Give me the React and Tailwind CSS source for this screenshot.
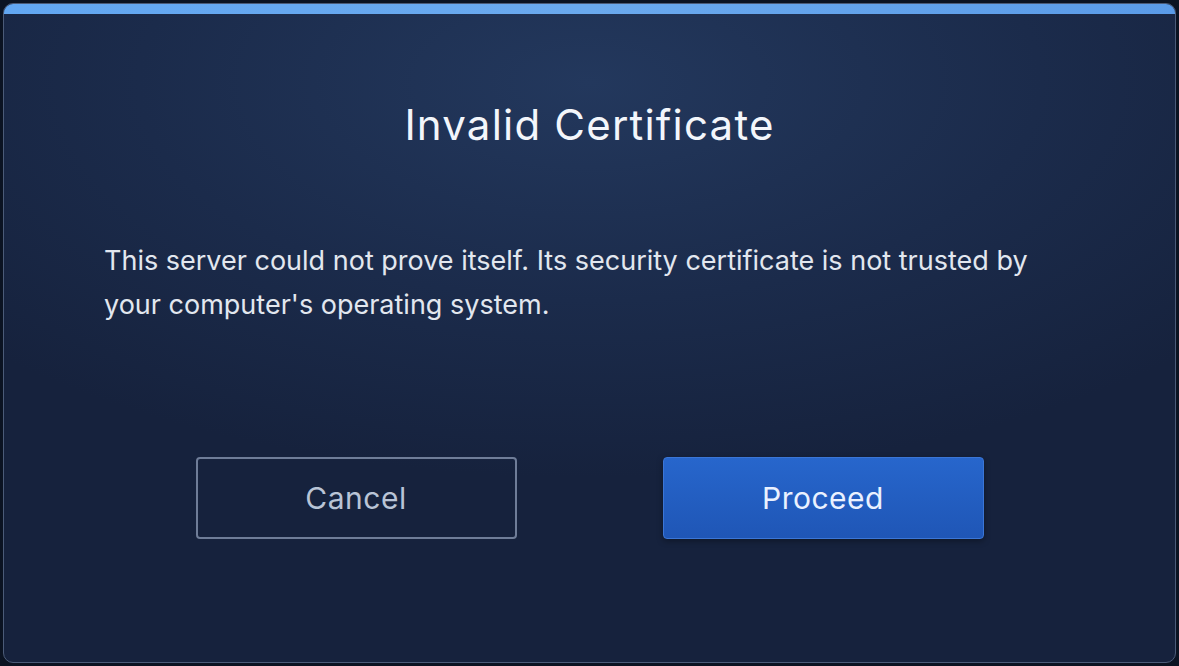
import React from "react";

const App = () => {
  return (
    <div
      className="w-full h-[666px] bg-[#0b1322] p-[3px]"
      style={{ fontFamily: "Inter, 'Noto Sans', sans-serif" }}
    >
      <div className="h-full flex flex-col rounded-[10px] overflow-hidden border border-[#4b5b78] bg-[radial-gradient(ellipse_70%_60%_at_50%_12%,#23385d_0%,#1b2b4b_55%,#16223d_100%)]">
        {/* top accent */}
        <div className="h-[10px] shrink-0 bg-gradient-to-r from-[#62a7f2] via-[#6aa9ee] to-[#5a9be8]"></div>

        <div className="flex-1 flex flex-col px-[100px]">
          <h1 className="mt-[85px] text-center text-[42px] leading-[52px] text-[#f3f6fb] font-normal tracking-[1.2px]">
            Invalid Certificate
          </h1>

          <p className="mt-[88px] text-[27px] leading-[44px] text-[#e2e7ef]">
            This server could not prove itself. Its security certificate is not trusted by
            <br />
            your computer's operating system.
          </p>

          <div className="mt-[130px] flex justify-center gap-[146px]">
            <button className="w-[321px] h-[82px] rounded-[4px] border-2 border-[#6f7d98] text-[30px] tracking-[0.5px] text-[#b9c4d6]">
              Cancel
            </button>
            <button className="w-[321px] h-[82px] rounded-[4px] border border-[#3b76d6] bg-gradient-to-b from-[#2766cc] to-[#1f56b6] text-[30px] tracking-[0.5px] text-[#eaf1ff] shadow-[0_2px_6px_rgba(0,0,0,0.35)]">
              Proceed
            </button>
          </div>
        </div>
      </div>
    </div>
  );
};

export default App;
